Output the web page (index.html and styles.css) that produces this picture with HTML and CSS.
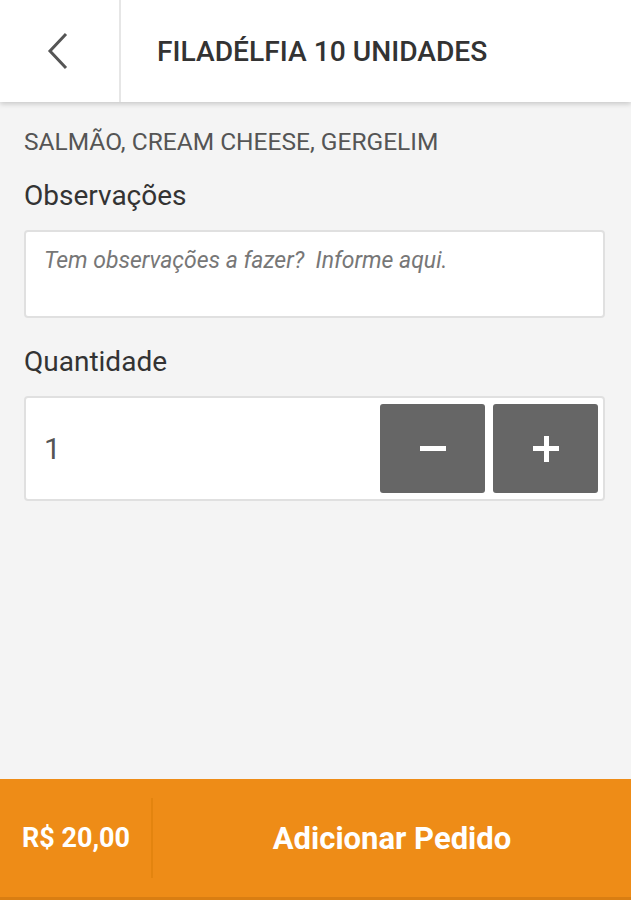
FILE: index.html
```html
<!DOCTYPE html>
<html lang="pt-BR">
<head>
  <meta charset="UTF-8">
  <meta name="viewport" content="width=device-width, initial-scale=1.0">
  <title>Filadélfia 10 unidades</title>
  <link rel="stylesheet" href="styles.css">
</head>
<body>
  <div class="page">
    <header class="topbar">
      <a class="back" href="#">
        <svg width="24" height="38" viewBox="0 0 24 38">
          <path d="M20 2 L4 19 L20 36" fill="none" stroke="#555" stroke-width="3"/>
        </svg>
      </a>
      <h1 class="title">FILADÉLFIA 10 UNIDADES</h1>
    </header>

    <main class="content">
      <p class="ingredients">SALMÃO, CREAM CHEESE, GERGELIM</p>

      <label class="field-label" for="obs">Observações</label>
      <textarea id="obs" class="notes" placeholder="Tem observações a fazer?  Informe aqui."></textarea>

      <label class="field-label qty-label" for="qty">Quantidade</label>
      <div class="qty-box">
        <input id="qty" class="qty-input" type="text" value="1">
        <button class="qty-btn" type="button" aria-label="Diminuir">
          <span class="bar"></span>
        </button>
        <button class="qty-btn" type="button" aria-label="Aumentar">
          <span class="bar"></span>
          <span class="bar vertical"></span>
        </button>
      </div>
    </main>

    <footer class="order-bar">
      <div class="price">R$ 20,00</div>
      <button class="add" type="button">Adicionar Pedido</button>
    </footer>
  </div>
</body>
</html>
```

FILE: styles.css
```css
* {
  box-sizing: border-box;
}

body {
  margin: 0;
  font-family: Roboto, "Liberation Sans", sans-serif;
  background-color: #f4f4f4;
}

.page {
  height: 900px;
  display: flex;
  flex-direction: column;
}

.topbar {
  height: 102px;
  display: flex;
  align-items: stretch;
  background-color: #fff;
  box-shadow: 0 2px 5px rgba(0, 0, 0, 0.18);
  position: relative;
  z-index: 1;
}

.back {
  width: 121px;
  border-right: 2px solid #e6e6e6;
  display: flex;
  align-items: center;
  padding-left: 46px;
}

.title {
  margin: 0 0 0 36px;
  align-self: center;
  font-size: 28.2px;
  font-weight: 500;
  color: #333;
}

.content {
  flex: 1;
  padding: 24px 26px 0 24px;
  display: flex;
  flex-direction: column;
}

.ingredients {
  margin: 0;
  font-size: 24.5px;
  color: #555;
  line-height: 32px;
}

.field-label {
  margin-top: 22px;
  font-size: 28px;
  color: #333;
  line-height: 32px;
}

.notes {
  margin-top: 18px;
  height: 88px;
  resize: none;
  border: 2px solid #e0e0e0;
  border-radius: 4px;
  padding: 15px 18px;
  font-family: Roboto, "Liberation Sans", sans-serif;
  font-size: 23px;
  background-color: #fff;
}

.notes::placeholder {
  color: #777;
  font-style: italic;
}

.qty-label {
  margin-top: 28px;
}

.qty-box {
  margin-top: 18px;
  height: 105px;
  display: flex;
  gap: 8px;
  padding: 6px 5px 6px 0;
  border: 2px solid #e0e0e0;
  border-radius: 4px;
  background-color: #fff;
}

.qty-input {
  flex: 1;
  min-width: 0;
  border: none;
  outline: none;
  padding-left: 18px;
  font-family: Roboto, "Liberation Sans", sans-serif;
  font-size: 30px;
  color: #555;
  background: transparent;
}

.qty-btn {
  width: 105px;
  border: none;
  border-radius: 3px;
  background-color: #666;
  position: relative;
  cursor: pointer;
}

.bar {
  position: absolute;
  left: 50%;
  top: 50%;
  width: 26px;
  height: 5px;
  margin: -3px 0 0 -13px;
  background-color: #fff;
}

.bar.vertical {
  width: 5px;
  height: 26px;
  margin: -13px 0 0 -2px;
}

.order-bar {
  height: 121px;
  display: flex;
  align-items: center;
  background-color: #ee8c17;
  border-bottom: 3px solid #d97e12;
}

.price {
  width: 153px;
  height: 80px;
  display: flex;
  align-items: center;
  padding-left: 22px;
  border-right: 2px solid #e3840f;
  font-size: 27px;
  font-weight: 700;
  color: #fff;
}

.add {
  flex: 1;
  height: 100%;
  border: none;
  background: transparent;
  font-family: Roboto, "Liberation Sans", sans-serif;
  font-size: 31px;
  font-weight: 700;
  color: #fff;
  cursor: pointer;
}
```
